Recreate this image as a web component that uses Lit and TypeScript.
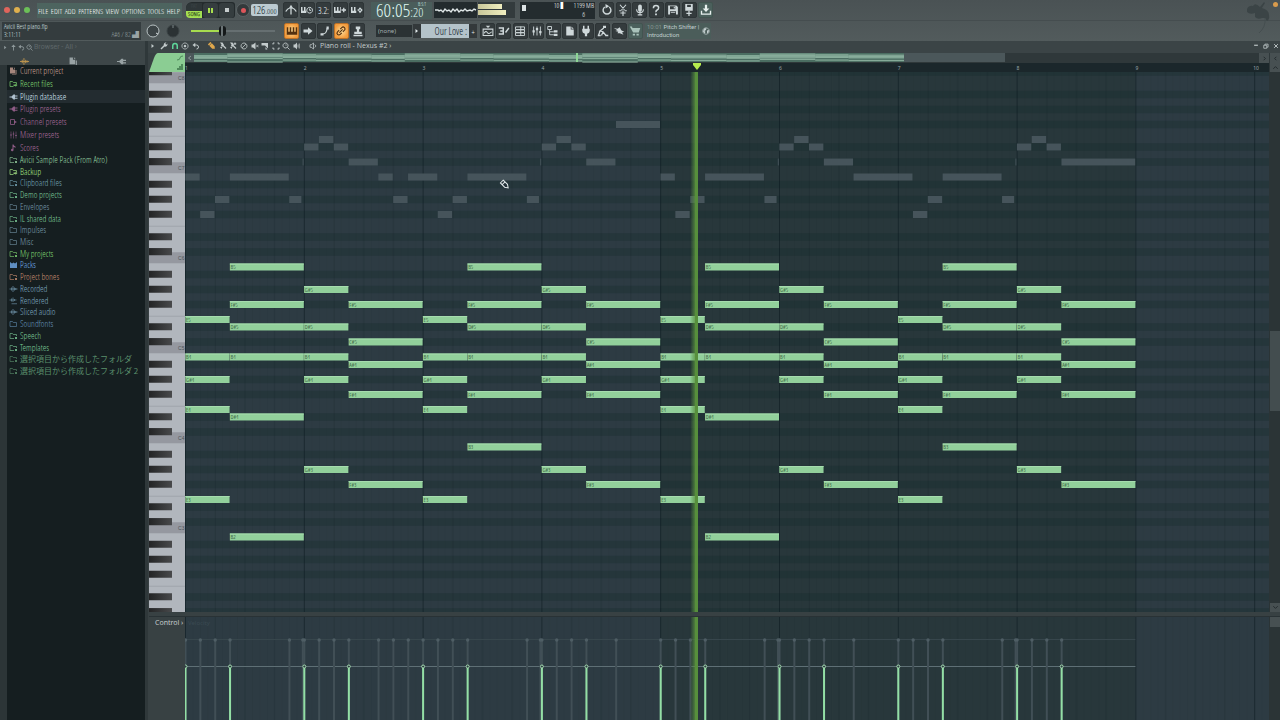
import { LitElement, html, svg, css, unsafeCSS, SVGTemplateResult } from "lit";
import { customElement, property } from "lit/decorators.js";
import { classMap } from "lit/directives/class-map.js";

const NARROW = unsafeCSS(`"Open Sans Condensed Light", "Noto Sans ExtraCondensed", "Noto Sans Condensed", "Roboto Condensed", "Roboto", "Noto Sans CJK JP", sans-serif`);

const f = (d: string) => svg`<path fill="currentColor" d=${d}/>`;
const s = (d: string, w = 1.6) => svg`<path fill="none" stroke="currentColor" stroke-width=${w} d=${d}/>`;

const ICONS: Record<string, SVGTemplateResult> = {
  metronome: svg`${s("M8 14V4M1 10Q3 6 7 5M15 10Q13 6 9 5", 1.7)}${f("M5.500 5L8 1L10.500 5Z")}`,
  wait: svg`${f("M0 4H2V9H4V4H6V9H7V12H0Z")}${s("M11.500 4.500a3.800 3.800 0 1 0 .01 0M11.500 6V8.500H13.500", 1.3)}`,
  stepkeys: svg`${f("M0 4H2V9H4V4H6V9H8V4H9V12H0Z")}${s("M13 5V11M10 8H16", 1.8)}`,
  loop: svg`${f("M0 4H2V9H4V4H6V9H7V12H0Z")}${s("M8.500 8H10L12 5.500L14.500 8L12 11L10 8", 1.6)}`,
  piano: svg`${f("M1 3H3V9H5V3H7V9H9V3H11V9H13V3H15V13H1Z")}`,
  arrow: svg`${f("M2 6H8V3L14 8L8 13V10H2Z")}`,
  slide: svg`${s("M5 12Q10 12 11 4", 1.5)}${f("M2 11h4v3H2Z M10 2h3v4H10Z")}`,
  link: svg`<g transform="rotate(-45 8 8)">${s("M7 5.500H4a2.500 2.500 0 0 0 0 5H7M9 5.500H12a2.500 2.500 0 0 1 0 5H9M5 8H11", 1.5)}</g>`,
  stamp: svg`${f("M5 2H11V5L9.500 6V9H13V12H3V9H6.500V6L5 5Z M2 13H14V15H2Z")}`,
  playlist: svg`${s("M1.500 5.500H14.500V14H1.500ZM3 11Q5 7 7 10T13 9", 1.4)}${f("M5 1H11L8 4Z")}`,
  steps: svg`${f("M1 3H7V5H1Z M3 7H7V9H3Z M1 11H7V13H1Z M6 3H8V13H6Z")}${s("M10 10L14.500 4", 1.8)}`,
  rack: svg`${s("M2 2.500H14V6H2ZM2 6.500H14V10H2ZM2 10.500H14V14H2ZM9 2V14", 1.2)}`,
  mixer: svg`${s("M3.500 2V14M8 2V14M12.500 2V14", 1.2)}${f("M2 7H5V10H2Z M6.500 4H9.500V7H6.500Z M11 8H14V11H11Z")}`,
  tree: svg`${s("M1 2H6V6H1ZM3.500 6V13H9M3.500 9H9", 1.2)}${f("M9 7H14V10H9Z M9 11.500H14V14.500H9Z")}`,
  file: svg`${f("M3 2H9V6H13V14H3Z M10 2L13 5H10Z")}`,
  files: svg`${f("M1 1H7V5H11V13H1Z")}${f("M8 1.500L11 4.500V1.500Z M12 6H14V15H5V14H12Z")}`,
  plug: svg`${f("M4 1H6V5H10V1H12V5H13V8Q13 11 9.500 11.500V15H6.500V11.500Q3 11 3 8V5H4Z")}`,
  tempo: svg`${s("M9 4L4 8L8 9L12 14M4 8L2 14M8 9L6 14", 1.7)}${f("M8 1H12V4H8Z M1 13H5V15H1Z M11 13H15V15H11Z")}`,
  tool: svg`${f("M1 4L6 5L9 3L11 7L15 9L12 10L14 13L9 11L6 11L7 9L3 8L6 7Z")}`,
  cart: svg`${f("M1 2H4L4.600 4H15L13 10H5.500Z M5 11.500H8V14H5Z M10 11.500H13V14H10Z")}`,
  undoCircle: svg`${s("M5 4A5.200 5.200 0 1 0 11 4", 1.9)}${f("M6 0L11 3L6 6Z")}`,
  cut: svg`${s("M4 1L10 8M12 1L6 8M4.500 12H11.500M8 8.500V16M3 9H6M10 9H13", 1.5)}`,
  mic: svg`${f("M5.500 3a2.500 2.500 0 0 1 5 0V8a2.500 2.500 0 0 1-5 0Z")}${s("M3.500 7Q3.500 11.500 8 11.500T12.500 7M8 11V14M5 14.500H11", 1.4)}`,
  help: svg`${s("M4.500 5.500Q4.500 2 8 2T11.500 5Q11.500 7 9.500 8T8 11", 2)}${f("M6.800 12.500H9.200V15H6.800Z")}`,
  save: svg`<path fill="currentColor" fill-rule="evenodd" d="M1.500 2H12.500L14.500 4V14H1.500Z M4 3V7H11V3Z M4 9.500V14H12V9.500Z"/>${f("M9 3.500H10.500V6H9Z M5 11H11V12H5Z")}`,
  saveNew: svg`<path fill="currentColor" fill-rule="evenodd" d="M3 0H13V9H3Z M5.500 1V4H10.500V1Z"/>${s("M8 9V16M4.500 12.500H11.500", 1.7)}`,
  download: svg`${f("M6.500 1H9.500V6H12.500L8 10.500L3.500 6H6.500Z")}${s("M2 9V13.500H14V9", 1.8)}`,
  globe: svg`${s("M8 1.500a6.500 6.500 0 1 0 .01 0", 1.3)}${f("M4 3L9 2L8 6L5 8L7 10L5 13L2 9Z M10 7L14 6L13 11L10 13Z")}`,
  tri: svg`${f("M5 4L10 8L5 12Z")}`,
  wrench: svg`${s("M2 14L9 7", 3)}${f("M8 8Q6 3 11 1L13 1L10.500 3.500L12.500 5.500L15 3Q15.500 9 10 9.500Z")}`,
  magnet: svg`${s("M3.500 14V7.500a4.500 4.500 0 0 1 9 0V14", 3)}`,
  target: svg`${s("M8 1.800a6.200 6.200 0 1 0 .01 0", 1.5)}${f("M8 5.500a2.500 2.500 0 1 0 .01 0Z")}`,
  undo: svg`${s("M4 6H9Q13 6 13 10T9 14", 2)}${f("M1 6L6.500 1.500V10.500Z")}`,
  pencil: svg`<g transform="rotate(45 8 8)">${f("M0 4.500H3V11.500H0Z M4 4.500H12L16 8L12 11.500H4Z")}</g>`,
  brush: svg`${f("M2 1H7L10 6L8 9L4 8L5 5Z")}${s("M8 7L14 13", 2.6)}${f("M2 10L7 9L5 14Z")}`,
  brushPlus: svg`${f("M2 1H7L10 6L8 9L4 8L5 5Z M2 10L7 9L5 14Z M11 1H13V6H11Z M9.500 2.500H14.500V4.500H9.500Z")}${s("M8 7L14 13", 2.6)}`,
  no: svg`${s("M8 2a6 6 0 1 0 .01 0M12 4L4 12", 1.6)}`,
  mute: svg`${f("M1 5H4L9 1V15L4 11H1Z")}${s("M10.500 5.500L15 10.500M15 5.500L10.500 10.500", 1.5)}`,
  slice: svg`${f("M1 2H14V13L8 7H1Z M9 10L13 15H9Z")}`,
  select: svg`${s("M2 5V2H5M11 2H14V5M14 11V14H11M5 14H2V11", 2)}`,
  zoom: svg`${s("M7 2a5 5 0 1 0 .01 0M10.500 10.500L15 15", 1.8)}${f("M7 5V7H9V5Z")}`,
  speaker: svg`${f("M1 5H4L8 1V15L4 11H1Z")}${s("M10 5V11M12.500 3V13", 1.5)}`,
  speakerO: svg`${s("M2 5.500H4.500L9 2V14L4.500 10.500H2ZM11.500 5L14 8L11.500 11", 1.5)}`,
  up: svg`${s("M8 15V4", 2)}${f("M3 7L8 1L13 7Z")}`,
  wave: svg`${s("M0 8H16M4 5V11M7 2V14M10 5V11M12.500 6V10", 1.5)}`,
  plugSide: svg`${f("M0 7H4L8 3H11V5H16V7H11V9.500H16V11.500H11V13H8L4 9H0Z")}`,
  folder: svg`${s("M1 3H6L7.500 5H14V13H1Z", 1.4)}`,
  folderDot: svg`${s("M14 8V5H7.500L6 3H1V13H9", 1.5)}${f("M11 10H15V14H11Z")}`,
  folderArrow: svg`${s("M14 8V5H7.500L6 3H1V13H8", 1.7)}${f("M8 9H12V7L16 10L12 14V12H8Z")}`,
  channel: svg`${s("M2 3H10V13H2Z", 1.6)}${f("M9 5L15 8L9 11Z")}`,
  faders: svg`${s("M3 1V15M8 1V15M13 1V15", 1.1)}${f("M1.500 7H4.500V9H1.500Z M6.500 5H9.500V7H6.500Z M11.500 8H14.500V10H11.500Z")}`,
  note: svg`${f("M6 1H8Q9 4 12 5V8Q10 6 8 6V12a2.500 2.500 0 1 1-2-2.400Z")}`,
  pack: svg`${f("M1 2L5 5L8 3L11 5L15 2V14H1Z")}`,
  render: svg`${s("M0 6H14M4 3V9M7 1V10M10 4V8M4 13.500H15", 1.4)}`,
  min: svg`${s("M3 6H13", 3)}`,
  restore: svg`${s("M2 6H10V14H2ZM5 6V3H13.500V11H10", 2)}`,
  close: svg`${s("M3 3L13 13M13 3L3 13", 2.4)}`,
  left: svg`${s("M10 4L6 8L10 12", 2)}`,
  right: svg`${s("M6 4L10 8L6 12", 2)}`,
  chevUp: svg`${s("M3 11L8 6L13 11", 2)}`,
  chevDown: svg`${s("M3 5L8 10L13 5", 2)}`,
};

@customElement("fl-icon")
class FlIcon extends LitElement {
  @property() name = "";
  static styles = css`
    :host { display: inline-flex; width: 12px; height: 12px; }
    svg { width: 100%; height: 100%; }
  `;
  render() {
    return html`<svg viewBox="0 0 16 16" aria-hidden="true">${ICONS[this.name]}</svg>`;
  }
}

const icon = (name: string) => html`<fl-icon name=${name}></fl-icon>`;
const button = (name: string, label: string, tone = "") =>
  html`<button class=${classMap({ tool: true, [tone || "plain"]: true })} aria-label=${label}>${icon(name)}</button>`;

@customElement("fl-toolbar")
class FlToolbar extends LitElement {
  static styles = css`
    :host { display: block; background: linear-gradient(#4a5254, #525b5c); color: #e4ecee; font: 8px/9px ${NARROW}; }
    button { appearance: none; border: 0; padding: 0; margin: 0; font: inherit; color: inherit; background: none; }
    .row { display: flex; align-items: center; height: 20px; }
    .row + .row { border-top: 1px solid #454d4f; height: 21px; box-sizing: border-box; }
    .lights { display: flex; gap: 4px; width: 33px; padding-left: 4px; }
    .lights button { width: 6px; height: 6px; border-radius: 50%; }
    .red { background: #e0655c; } .amber { background: #dfb04e; } .green { background: #6cc058; }
    .menu { display: flex; justify-content: space-between; align-items: center; width: 145px; height: 15px; box-sizing: border-box; padding: 0 2px 0 1px; background: #4d645f; color: #fff; white-space: nowrap; }
    .transport { display: flex; align-items: center; gap: 1px; width: 49px; height: 16px; margin-left: 4px; background: #242b2d; border-radius: 6px 3px 3px 6px; }
    .song { width: 16px; height: 15px; display: grid; grid-template-rows: 8px 7px; border-radius: 5px 0 0 5px; font-size: 6px; line-height: 7px; background: #2e3638; }
    .song span { color: #3f484a; } .song b { background: #a4e052; color: #2d421c; font-weight: 700; border-radius: 0 0 0 4px; }
    .tp { width: 15px; height: 15px; border-radius: 3px; background: #353d3f; display: flex; align-items: center; justify-content: center; }
    .pause::before { content: ""; width: 1px; height: 5px; border: solid #a8df4e; border-width: 0 2px; }
    .stop::before { content: ""; width: 4px; height: 4px; background: #c6cccd; }
    .rec { width: 14px; height: 14px; margin-left: 1px; border-radius: 50%; background: #33393b; border: 1px solid #5b6365; box-sizing: border-box; display: flex; align-items: center; justify-content: center; }
    .rec::before { content: ""; width: 5px; height: 5px; border-radius: 50%; background: #dc555a; }
    .bpm { width: 27px; height: 12px; margin-left: 1px; background: #bccbd2; color: #0b1820; border-radius: 2px; font-size: 11px; line-height: 12px; text-align: center; white-space: nowrap; }
    .bpm small { font-size: 8px; }
    .group { display: flex; justify-content: space-between; }
    .five { width: 81px; margin-left: 5px; }
    .seven { width: 114px; margin-left: 4px; }
    .ten { width: 163px; margin-left: 3px; }
    .tool { width: 15px; height: 16px; border-radius: 2px; background: #343b3d; border: 1px solid #2d3436; box-sizing: border-box; display: flex; align-items: center; justify-content: center; color: #cfd8da; }
    .num { font-size: 9px; color: #fff; }
    .tool.hot { background: radial-gradient(#ffe2a0, #f39b3c 75%); border-color: #bd7228; color: #54300f; }
    .tool.teal { background: #4b605c; color: #a9c2ba; border-color: #425450; }
    .tool.teal.lit { color: #e8f0ee; }
    .clock { width: 61px; height: 17px; margin-left: 7px; box-sizing: border-box; padding: 0 6px 0 5px; background: #4a5d5b; color: #dff5f0; display: grid; grid-template-columns: auto 1fr; font-size: 19px; line-height: 17px; white-space: nowrap; }
    .clock .beats { display: flex; flex-direction: column; align-items: flex-start; }
    .clock sup { align-self: flex-end; font-size: 5px; line-height: 5px; }
    .clock small { font-size: 13px; line-height: 11px; }
    .scope { width: 43px; height: 16px; margin-left: 2px; background: #232b2e; }
    .meter { width: 37px; height: 16px; margin-left: 1px; background: #333b3d; display: flex; flex-direction: column; gap: 1px; }
    .meter i { display: block; height: 5px; background: linear-gradient(90deg, #c9c79a, #f0eebf); }
    .meter i:first-child { width: 24px; margin-top: 2px; } .meter i:nth-child(2) { width: 28px; }
    .cpu { width: 75px; height: 17px; margin-left: 5px; box-sizing: border-box; background: #242c2f; color: #fff; display: grid; grid-template-columns: 1fr auto auto; column-gap: 6px; padding: 0 1px 0 2px; font-size: 7px; line-height: 8px; text-align: right; }
    .cpu i { width: 2px; height: 6px; margin-top: 1px; background: #dce3e4; }
    .cpu .sq { justify-self: start; width: 4px; margin-top: 3px; }
    .cpu .voices { grid-column: 1 / 4; padding-right: 9px; }
    .hint { width: 139px; height: 18px; margin-left: 2px; box-sizing: border-box; padding: 0 2px; background: #343c3e; color: #dbe4e6; display: grid; grid-template-columns: 1fr auto; align-content: center; font-size: 7px; line-height: 8px; }
    .hint span:first-child { grid-column: 1 / 3; }
    .hint .mem { color: #99a3a5; }
    .knobs { display: flex; gap: 6px; margin-left: 5px; width: 38px; }
    .knob { width: 14px; height: 14px; }
    .knob svg { width: 14px; height: 14px; display: block; }
    .vol { appearance: none; width: 88px; height: 14px; margin: 0 0 0 7px; background: linear-gradient(90deg, #a7dc4f 32px, #666f71 32px) 0 50% / 84px 2px no-repeat; }
    .vol::-webkit-slider-thumb { appearance: none; width: 7px; height: 10px; border-radius: 3px; background: linear-gradient(90deg, #15191a 2px, #6b7476 2px 4px, #15191a 4px); }
    .snap { width: 36px; height: 12px; margin-left: 11px; padding: 0 2px; box-sizing: border-box; appearance: none; border: 0; border-radius: 0; background: #2b3234; color: #a5aeb0; font: 6px/12px "Noto Sans", sans-serif; }
    .pat { display: flex; margin-left: 1px; width: 64px; height: 14px; }
    .pat button { width: 8px; background: #33393b; display: flex; align-items: center; justify-content: center; }
    .pat output { flex: 1; background: #b4c3ca; color: #04121b; font-size: 10px; line-height: 14px; text-align: right; padding-right: 2px; white-space: nowrap; }
    .tip { width: 66px; height: 16px; margin-left: 2px; box-sizing: border-box; padding: 0 1px 0 2px; background: #4b5d5a; display: flex; justify-content: space-between; align-items: center; color: #c3cfcf; font: 6px/8px "Roboto", sans-serif; white-space: nowrap; }
    .tip em { font-style: normal; color: #84928f; }
    .tip fl-icon { width: 8px; height: 8px; }
    .logo { margin-left: auto; width: 34px; height: 40px; align-self: flex-start; }
  `;
  render() {
    return html`
      <div class="row">
        <div class="lights"><button class="red" aria-label="Close"></button><button class="amber" aria-label="Minimize"></button><button class="green" aria-label="Zoom"></button></div>
        <nav class="menu">${["FILE", "EDIT", "ADD", "PATTERNS", "VIEW", "OPTIONS", "TOOLS", "HELP"].map((m) => html`<button>${m}</button>`)}</nav>
        <div class="transport">
          <button class="song"><span>PAT</span><b>SONG</b></button>
          <button class="tp pause" aria-label="Pause"></button>
          <button class="tp stop" aria-label="Stop"></button>
        </div>
        <button class="rec" aria-label="Record"></button>
        <div class="bpm">126<small>.000</small></div>
        <div class="group five">
          ${button("metronome", "Metronome")}${button("wait", "Wait for input")}
          <button class="tool num">3.2:</button>
          ${button("stepkeys", "Step edit")}${button("loop", "Loop record")}
        </div>
        <div class="clock"><span>60:05</span><span class="beats"><sup>B:S:T</sup><small>:20</small></span></div>
        <svg class="scope" viewBox="0 0 43 16"><path fill="none" stroke="#dfe6e7" stroke-width="1.400" d="M1 8H4L5 9L7 8L9 10L11 7L13 9L15 8L17 10L19 7L21 9L23 7L25 10L27 8L29 9L31 7L33 9L36 8L38 9L40 7L42 8"/></svg>
        <div class="meter"><i></i><i></i></div>
        <div class="cpu"><i class="sq"></i><span>10 ▍</span><span>1199 MB</span><span class="voices">6</span></div>
        <div class="group seven">
          ${button("undoCircle", "Undo")}${button("cut", "Cut")}${button("mic", "Record audio")}${button("help", "Help")}${button("save", "Save")}${button("saveNew", "Save new version")}
          <button class="tool teal lit" aria-label="Download">${icon("download")}</button>
        </div>
        <svg class="logo" viewBox="0 0 34 40"><path fill="#3b4446" d="M1 9Q3 5 7 6Q9 2 14 7L18 2L19 3L16 8Q23 10 23 15Q24 19 21 21L19 18L16 18Q12 20 9 17L9 13Q4 15 1 12Z"/><path fill="none" stroke="#454e50" d="M19 18Q20 27 13 33"/><circle cx="29.500" cy="4.500" r="2.500" fill="#d99b4d"/></svg>
      </div>
      <div class="row">
        <div class="hint"><span>Avicii Best piano.flp</span><span>3:11:11</span><span class="mem">A#6 / 82 ▟</span></div>
        <div class="knobs">
          <div class="knob"><svg viewBox="0 0 14 14"><circle cx="7" cy="7" r="6" fill="#3c4446" stroke="#b7c0c2" stroke-width="1"/><path stroke="#d7dddf" d="M10 9L12 10"/></svg></div>
          <div class="knob"><svg viewBox="0 0 14 14"><circle cx="7" cy="7" r="6" fill="#2b3234" stroke="#3b4345"/><path stroke="#7b8486" d="M7 1V4"/></svg></div>
        </div>
        <input class="vol" type="range" aria-label="Master volume" value="34">
        <div class="group five">
          ${button("piano", "Typing keyboard", "hot")}${button("arrow", "Auto-scroll")}${button("slide", "Slide")}${button("link", "Link", "hot")}${button("stamp", "Multilink")}
        </div>
        <select class="snap" aria-label="Snap"><option>(none)</option></select>
        <div class="pat"><button aria-label="Previous pattern">${icon("tri")}</button><output>Our Love :</output><button aria-label="Add pattern">+</button></div>
        <div class="group ten">
          ${button("playlist", "Playlist")}${button("steps", "Piano roll")}${button("rack", "Channel rack")}${button("mixer", "Mixer")}${button("tree", "Browser")}${button("file", "Plugin picker")}${button("plug", "Plugins")}${button("tempo", "Tempo tap")}${button("tool", "Tools")}${button("cart", "Shop", "teal")}
        </div>
        <div class="tip"><span><em>10:01</em> Pitch Shifter |<br>Introduction</span>${icon("globe")}</div>
      </div>`;
  }
}

type Entry = [string, string, string];
const LIBRARY: Entry[] = [
  ["files", "Current project", "#cba094"], ["folderArrow", "Recent files", "#80d672"], ["plugSide", "Plugin database", "#d3e6f6"],
  ["plugSide", "Plugin presets", "#ab6b9e"], ["channel", "Channel presets", "#ab6b9e"], ["faders", "Mixer presets", "#ab6b9e"], ["note", "Scores", "#ab6b9e"],
];
const FOLDERS: Entry[] = [
  ["folderDot", "Avicii Sample Pack (From Atro)", "#97d2a1"], ["folderArrow", "Backup", "#a8e687"], ["folderDot", "Clipboard files", "#74a4b6"],
  ["folderDot", "Demo projects", "#7ecc99"], ["folder", "Envelopes", "#789bad"], ["folderDot", "IL shared data", "#7ecc99"],
  ["folder", "Impulses", "#789bad"], ["folder", "Misc", "#789bad"], ["folderDot", "My projects", "#80d672"],
  ["pack", "Packs", "#73aceb"], ["folderDot", "Project bones", "#ca8f72"], ["wave", "Recorded", "#7fa9c1"], ["render", "Rendered", "#7fa9c1"],
  ["wave", "Sliced audio", "#7fa9c1"], ["folder", "Soundfonts", "#6593ba"], ["folderDot", "Speech", "#7ecc99"], ["folderDot", "Templates", "#7ecc99"],
  ["folderDot", "選択項目から作成したフォルダ", "#5a8f6c"], ["folderDot", "選択項目から作成したフォルダ 2", "#5a8f6c"],
];

@customElement("fl-browser")
class FlBrowser extends LitElement {
  static styles = css`
    :host { display: flex; flex-direction: column; background: #2c3537; border-right: 3px solid #2f383a; box-sizing: border-box; font: 9px/10px ${NARROW}; }
    .head { background: #3d4648; height: 24px; display: grid; grid-template-rows: 12px 12px; color: #8a9496; }
    .nav { display: flex; align-items: center; gap: 1px; padding-left: 2px; font: 7px/10px "Roboto", sans-serif; color: #5d6668; }
    .nav fl-icon { width: 7px; height: 7px; color: #8f999b; }
    .tabs { display: flex; justify-content: space-between; padding: 1px 19px 0 20px; }
    .tabs button { border: 0; padding: 0; background: none; color: #98a2a4; height: 10px; }
    .tabs button:first-child { color: #c79a4e; }
    .tabs fl-icon { width: 9px; height: 9px; }
    .body { flex: 1; margin-left: 7px; background: #151e20; }
    ul { list-style: none; margin: 0; padding: 0; display: grid; grid-auto-rows: 1fr; }
    .library { height: 89px; }
    .folders { height: 223px; }
    a { display: flex; align-items: center; gap: 2px; height: 100%; padding-left: 2px; color: inherit; text-decoration: none; white-space: nowrap; }
    a:lang(ja) { font: 8px/10px "Noto Sans CJK JP", sans-serif; }
    a fl-icon { width: 9px; height: 8px; flex: none; opacity: .8; }
    .picked { background: #232c30; }
  `;
  private list(entries: Entry[], kind: string) {
    return html`<ul class=${kind}>${entries.map(([i, t, c]) => html`<li class=${t === "Plugin database" ? "picked" : ""} style="color:${c}"><a href="#" lang=${t.charCodeAt(0) > 255 ? "ja" : "en"}>${icon(i)}${t}</a></li>`)}</ul>`;
  }
  render() {
    return html`
      <div class="head">
        <div class="nav">${icon("tri")}${icon("up")}${icon("undo")}${icon("zoom")}<span>Browser - All ›</span></div>
        <div class="tabs"><button aria-label="Sounds">${icon("wave")}</button><button aria-label="Files">${icon("files")}</button><button aria-label="Plugins">${icon("plugSide")}</button></div>
      </div>
      <div class="body">${this.list(LIBRARY, "library")}${this.list(FOLDERS, "folders")}</div>`;
  }
}

/* Piano roll model: pitch is octave * 12 + semitone, time is in sixteenth steps. */
const BAR = 118.8;
const STEP = BAR / 16;
const ROW = 7.5;
const SEMIS = ["C", "C#", "D", "D#", "E", "F", "F#", "G", "G#", "A", "A#", "B"];
const pitch = (name: string) => Number(name.slice(-1)) * 12 + SEMIS.indexOf(name.slice(0, -1));
const rowTop = (p: number) => 263.25 - 72 + (71 - p) * ROW;

type Note = { at: number; len: number; name: string };
const CHORDS: [number, number, string][] = [
  [0, 6, "E5 B4 G#4 E4 E3"], [6, 10, "B5 F#5 D#5 B4 D#4 B2"], [16, 6, "G#5 D#5 B4 G#4 G#3"], [22, 10, "F#5 C#5 A#4 F#4 F#3"],
  [32, 6, "E5 B4 G#4 E4 E3"], [38, 10, "B5 F#5 D#5 B4 F#4 B3"], [48, 6, "G#5 D#5 B4 G#4 G#3"], [54, 10, "F#5 C#5 A#4 F#4 F#3"],
];
const NOTES: Note[] = [0, 64].flatMap((o) => CHORDS.flatMap(([at, len, names]) => names.split(" ").map((name) => ({ at: at + o, len, name }))));
const HITS = [0, 64].flatMap((o) => CHORDS.map(([at]) => at + o));

const RUN: [number, number, string][] = [
  [0, 2, "B6"], [2, 2, "F#6"], [4, 2, "G#6"], [6, 8, "B6"], [14, 1.7, "G#6"], [15.8, 0.2, "C#7"], [16, 2, "D#7"], [18, 2, "E7"], [20, 2, "D#7"],
];
const GHOSTS: Note[] = [
  ...[0, 32, 64, 96].flatMap((o) => RUN.map(([at, len, name]) => ({ at: at + o, len, name }))),
  { at: 22, len: 4, name: "C#7" }, { at: 26, len: 2, name: "B6" }, { at: 28, len: 2, name: "G#6" }, { at: 30, len: 2.1, name: "B6" },
  { at: 54, len: 4, name: "C#7" }, { at: 58, len: 6, name: "F#7" },
  { at: 86, len: 4, name: "C#7" }, { at: 90, len: 6.1, name: "B6" },
  { at: 118, len: 10, name: "C#7" },
];
const PITCHES = Array.from({ length: 73 }, (_, i) => 97 - i);
const isBlack = (p: number) => SEMIS[p % 12].length === 2;

const gridBack = (h: number) => svg`
  <defs>
    <pattern id="steps" width=${BAR} height="20" patternUnits="userSpaceOnUse">
      ${Array.from({ length: 16 }, (_, i) => svg`<rect x=${i * STEP} width="1" height="20" fill="#08161b" opacity=${i === 0 ? 0.5 : i % 4 === 0 ? 0.22 : 0.08}/>`)}
    </pattern>
  </defs>
  <rect width="100%" height=${h} fill="#2d3b43"/>
  <rect x=${BAR * 4} width=${BAR * 4} height=${h} fill="#28373b"/>`;
const gridLines = (h: number) => svg`<rect width="100%" height=${h} fill="url(#steps)"/>`;

@customElement("fl-piano-roll")
class FlPianoRoll extends LitElement {
  static styles = css`
    :host { display: flex; flex-direction: column; min-width: 0; background: #384143; font: 7px/9px "Noto Sans", sans-serif; color: #c3cbcc; }
    button { appearance: none; border: 0; padding: 0; background: none; color: inherit; display: flex; align-items: center; justify-content: center; }
    .title { height: 12px; box-sizing: border-box; padding-bottom: 3px; display: flex; align-items: center; background: #3b4446; }
    .title span { font-family: "Open Sans", sans-serif; }
    .strip { display: flex; justify-content: space-between; }
    .strip fl-icon, .title > fl-icon { width: 8px; height: 8px; }
    .setup { width: 51px; margin-left: 1px; }
    .edit { width: 93px; margin-left: 8px; }
    .title > fl-icon { margin: 0 3px 0 8px; }
    .on { color: #5fd69a; } .pen { color: #e0a84c; }
    .win { margin-left: auto; width: 26px; padding-right: 1px; display: flex; justify-content: space-between; }
    .win fl-icon { width: 6px; height: 6px; }
    .top { display: grid; grid-template-columns: 36px 1fr 21px; height: 19px; margin-left: 1px; }
    .top > * { min-width: 0; }
    .corner { display: block; width: 36px; height: 19px; }
    .lanes { display: grid; grid-template-rows: 10px 9px; background: #2f383a; overflow: hidden; }
    .lanes svg { display: block; width: 100%; height: 100%; }
    .ruler { background: #1b272b; }
    .ends { display: grid; grid-template-columns: 10px 10px; grid-template-rows: 10px 9px; gap: 0 1px; background: linear-gradient(90deg, #1b272b 10px, #2f383a 10px); }
    .ends button, .bar button { background: #475052; color: #1f2729; }
    .ends fl-icon, .bar fl-icon { width: 7px; height: 7px; }
    .ends .scroll { grid-column: 2; }
    .main { flex: 1; min-height: 0; display: grid; grid-template-columns: 36px 1fr 11px; margin-left: 1px; overflow: hidden; }
    .keys, .grid, .control { min-height: 0; min-width: 0; overflow: hidden; }
    .keys svg, .grid svg, .control svg { display: block; width: 100%; height: 100%; }
    .bar { background: #2b3436; padding-left: 1px; display: grid; grid-template-rows: 259fr 80fr 192fr 9px; }
    .bar .thumb { background: #434d4f; grid-row: 2; }
    .bar button { grid-row: 4; }
    .low { height: 104px; display: grid; grid-template-columns: 36px 1fr 11px; margin: 4px 0 0 1px; border-top: 1px solid #293235; box-sizing: border-box; }
    .label { padding: 1px 0 0 6px; white-space: nowrap; line-height: 10px; }
    .low .bar { display: block; } .low .bar button { width: 10px; height: 10px; }
    .keyname { font: 5px "Liberation Sans", sans-serif; fill: #4d5458; }
    .notename { font: 6px ${NARROW}; fill: #12301a; }
    .tick { font: 5px "Noto Sans", sans-serif; fill: #9aa5a8; }
    .faint { font: 6px "Noto Sans", sans-serif; fill: #3b4a52; }
  `;

  private keys() {
    return svg`
      <defs><linearGradient id="ebony"><stop offset="0" stop-color="#232425"/><stop offset="1" stop-color="#48494b"/></linearGradient></defs>
      <rect width="36" height="100%" fill="#b1b6bd"/>
      ${PITCHES.map((p) => {
        const y = rowTop(p);
        if (isBlack(p)) return svg`<rect y=${y} width="23" height=${ROW - 0.5} fill="url(#ebony)"/>`;
        if (p % 12 === 0) return svg`<rect y=${y - 3.5} width="36" height="11" fill="#9598a0"/><text class="keyname" x="29" y=${y + 4}>C${p / 12}</text>`;
        if (p % 12 === 5) return svg`<rect y=${y + ROW} width="36" height="1" fill="#a0a5ac"/>`;
        return null;
      })}
      ${PITCHES.filter((p) => p % 12 === 1).map((p) => svg`<rect y=${rowTop(p)} width="23" height=${ROW - 0.5} fill="url(#ebony)"/>`)}`;
  }

  private playhead(h: number) {
    return svg`<defs><linearGradient id="glow"><stop offset="0" stop-color="#4c8a35" stop-opacity="0"/><stop offset="1" stop-color="#5c9440" stop-opacity=".75"/></linearGradient></defs>
      <rect x="505" width="5" height=${h} fill="url(#glow)"/><rect x="510" width="3" height=${h} fill="#578f3c"/>`;
  }

  private overview() {
    const k = 710 / (BAR * 8);
    return svg`
      <rect y="0" width="820" height="9" fill="#4b575a"/>
      <rect x="9" y="0" width="710" height="9" fill="#4b6e62"/>
      ${NOTES.map((n) => svg`<rect x=${9 + n.at * STEP * k} y=${0.5 + (71 - pitch(n.name)) * 0.22} width=${n.len * STEP * k} height="1.200" fill="#8fb5a2" opacity=".85"/>`)}
      <rect x="391" width="2" height="9" fill="#8ed696"/>
      <path d="M6 3L3.500 5L6 7" fill="none" stroke="#90999b"/>`;
  }

  render() {
    return html`
      <div class="title">
        <div class="strip setup">${["tri", "wrench"].map(icon)}<fl-icon class="on" name="magnet"></fl-icon>${["target", "undo"].map(icon)}</div>
        <div class="strip edit"><fl-icon class="pen" name="pencil"></fl-icon>${["brush", "brushPlus", "no", "mute", "slice", "select", "zoom", "speaker"].map(icon)}</div>
        ${icon("speakerO")}<span>Piano roll - Nexus #2 ›</span>
        <div class="win"><button aria-label="Minimize">${icon("min")}</button><button aria-label="Restore">${icon("restore")}</button><button aria-label="Close">${icon("close")}</button></div>
      </div>
      <div class="top">
        <svg class="corner" viewBox="0 0 36 19"><path fill="#8bcd93" d="M9 0H36V19H0L5 5Q7 0 9 0Z"/><path fill="none" stroke="#4f8a5b" d="M28 7Q31 7 31 5T34 3"/><path fill="#4f8a5b" d="M28 17V15H30V13H32V11H34V17Z"/></svg>
        <div class="lanes">
          <svg>${this.overview()}</svg>
          <div class="ruler"><svg>
            ${Array.from({ length: 10 }, (_, i) => svg`<text class="tick" x=${i * BAR + (i === 9 ? -1 : 0)} y="7">${i + 1}</text>`)}
            <path fill="#b7ec4e" d="M508 0H516V2L512 7L508 2Z"/>
          </svg></div>
        </div>
        <div class="ends"><button aria-label="Scroll right">${icon("right")}</button><button aria-label="Zoom">${icon("left")}</button><button class="scroll" aria-label="Scroll up">${icon("chevUp")}</button></div>
      </div>
      <div class="main">
        <div class="keys"><svg>${this.keys()}</svg></div>
        <div class="grid"><svg>
          ${gridBack(2000)}
          ${PITCHES.filter(isBlack).map((p) => svg`<rect y=${rowTop(p)} width="100%" height=${ROW} fill="#132a2c" opacity=".3"/>`)}
          ${gridLines(2000)}
          ${GHOSTS.map((n) => svg`<rect x=${n.at * STEP + 0.3} y=${rowTop(pitch(n.name)) + 0.25} width=${n.len * STEP - 0.5} height="7" fill="#46545b"/>`)}
          ${NOTES.map((n) => svg`<rect x=${n.at * STEP + 0.3} y=${rowTop(pitch(n.name)) + 0.25} width=${n.len * STEP - 0.3} height="7" fill="#92d09b"/><rect x=${n.at * STEP + 0.3} y=${rowTop(pitch(n.name)) + 0.25} width=${n.len * STEP - 0.3} height="1" fill="#a6dcae"/><text class="notename" x=${n.at * STEP + 1} y=${rowTop(pitch(n.name)) + 6}>${n.name}</text>`)}
          ${this.playhead(2000)}
          <g transform="translate(316 108)"><g transform="rotate(45 4 4)"><path fill="#24323a" stroke="#e3eaec" d="M0 2.500H6L9 4.500L6 6.500H0ZM2.500 2.500V6.500"/></g></g>
        </svg></div>
        <div class="bar"><div class="thumb"></div><button aria-label="Scroll down">${icon("chevDown")}</button></div>
      </div>
      <div class="low">
        <div class="label">Control ›</div>
        <div class="control"><svg>
          ${gridBack(400)}${gridLines(400)}
          <text class="faint" x="3" y="8">Velocity</text>
          <rect y="22" width=${BAR * 8} height="1" fill="#37464c"/>
          <rect y="49" width=${BAR * 8} height="1" fill="#5e6f75"/>
          ${GHOSTS.map((n) => svg`<rect x=${n.at * STEP - 0.5} y="23" width="2" height="400" fill="#414f56"/><circle cx=${n.at * STEP + 0.5} cy="23" r="1.700" fill="#4f5e65"/>`)}
          ${HITS.map((at) => svg`<rect x=${at * STEP - 0.5} y="51" width="2" height="400" fill="#93dfa5"/><circle cx=${at * STEP + 0.5} cy="49.500" r="1.500" fill="#2c3b41" stroke="#a5dcb0"/>`)}
          ${this.playhead(400)}
        </svg></div>
        <div class="bar"><button aria-label="Control options"></button></div>
      </div>`;
  }
}

@customElement("app-root")
class AppRoot extends LitElement {
  static styles = css`
    :host { display: flex; flex-direction: column; height: 100vh; overflow: hidden; background: #2c3537; }
    .work { flex: 1; min-height: 0; display: grid; grid-template-columns: 148px 1fr; }
  `;
  render() {
    return html`<fl-toolbar></fl-toolbar><div class="work"><fl-browser></fl-browser><fl-piano-roll></fl-piano-roll></div>`;
  }
}
